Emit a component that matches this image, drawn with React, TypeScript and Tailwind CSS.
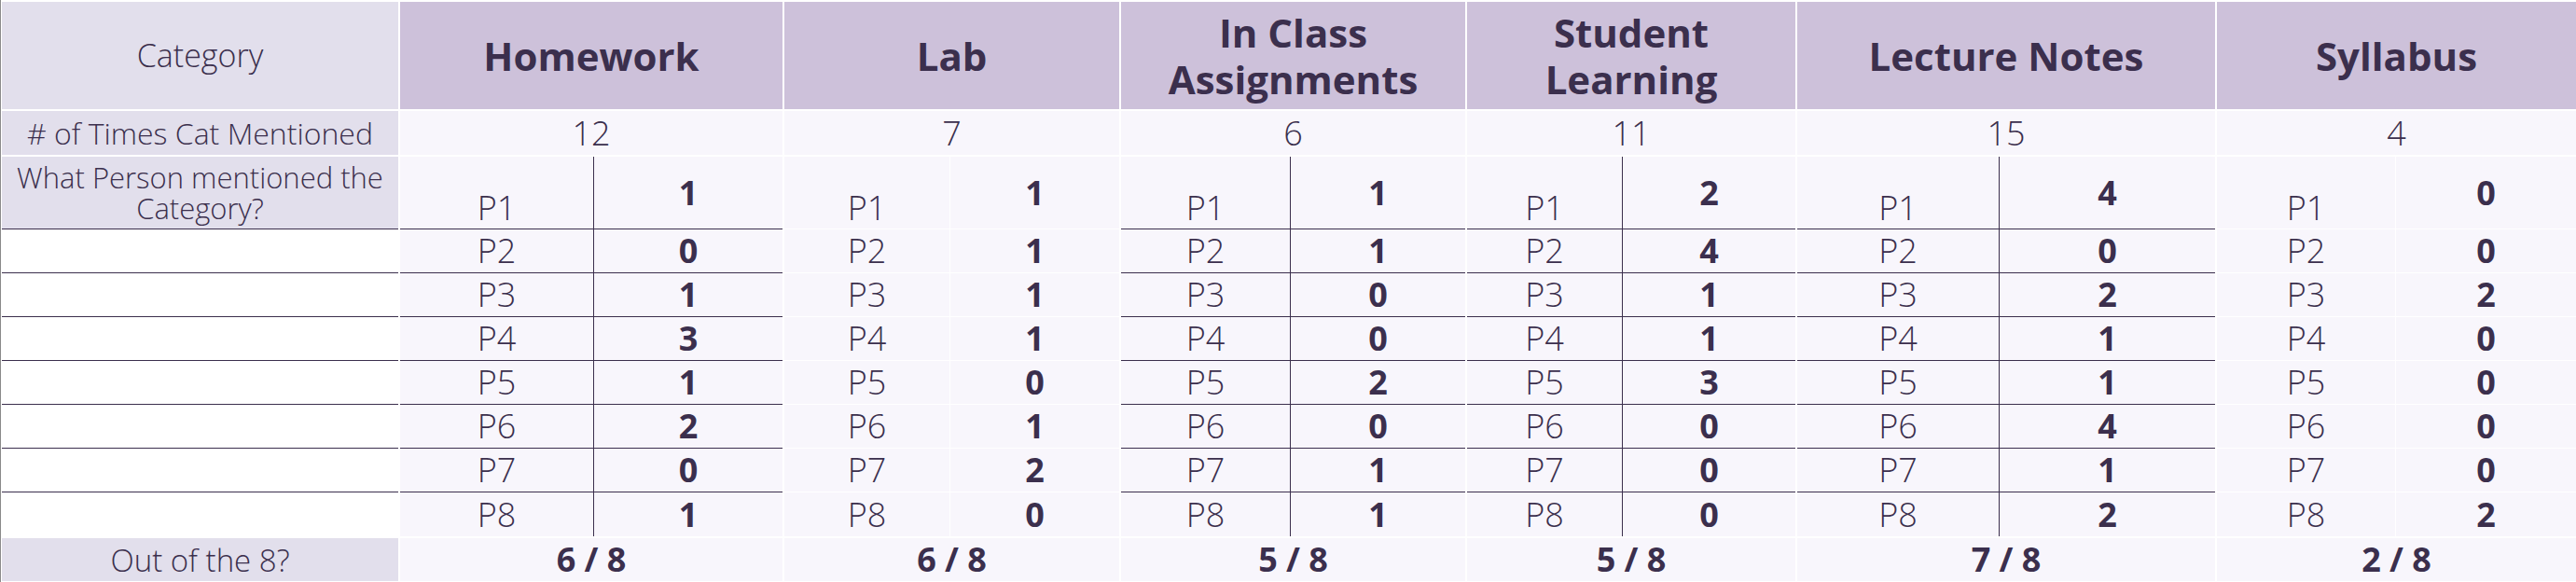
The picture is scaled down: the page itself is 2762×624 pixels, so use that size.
import React from 'react';

type Category = {
  title: string[];
  total: number;
  counts: number[];
  outOf: string;
  ruled: boolean; // dark cell rules (true) or white ones (false)
};

const categories: Category[] = [
  { title: ['Homework'], total: 12, counts: [1, 0, 1, 3, 1, 2, 0, 1], outOf: '6 / 8', ruled: true },
  { title: ['Lab'], total: 7, counts: [1, 1, 1, 1, 0, 1, 2, 0], outOf: '6 / 8', ruled: false },
  { title: ['In Class', 'Assignments'], total: 6, counts: [1, 1, 0, 0, 2, 0, 1, 1], outOf: '5 / 8', ruled: true },
  { title: ['Student', 'Learning'], total: 11, counts: [2, 4, 1, 1, 3, 0, 0, 0], outOf: '5 / 8', ruled: true },
  { title: ['Lecture Notes'], total: 15, counts: [4, 0, 2, 1, 1, 4, 1, 2], outOf: '7 / 8', ruled: true },
  { title: ['Syllabus'], total: 4, counts: [0, 0, 2, 0, 0, 0, 0, 2], outOf: '2 / 8', ruled: false },
];

const cols = 'grid grid-cols-[425px_410px_359px_369px_352px_448px_385px] gap-x-[2px]';
const subCols = [
  'grid-cols-[208px_1fr]',
  'grid-cols-[178px_1fr]',
  'grid-cols-[182px_1fr]',
  'grid-cols-[167px_1fr]',
  'grid-cols-[217px_1fr]',
  'grid-cols-[192px_1fr]',
];

function PersonCell({ cat, idx, index }: { cat: Category; idx: number; index: number }) {
  const first = index === 0;
  const last = index === 7;
  const rule = cat.ruled ? 'border-[#3b2f4d]' : 'border-white';
  return (
    <div className={`grid ${subCols[idx]} bg-[#f8f6fc] ${last ? '' : `border-b ${rule}`}`}>
      <div
        className={`flex justify-center border-r ${rule} text-[36px] font-light leading-none ${
          first ? 'items-end pb-[4px]' : 'items-center'
        }`}
      >
        P{index + 1}
      </div>
      <div className="flex items-center justify-center text-[36px] font-bold leading-none">
        {cat.counts[index]}
      </div>
    </div>
  );
}

export default function App() {
  return (
    <div className="w-[2762px] h-[624px] bg-white border-l border-[#8a8a8a] pl-[1px] pt-[2px] text-[#3b2f4d] font-['Open_Sans','Liberation_Sans',sans-serif]">
      {/* header */}
      <div className={`${cols} h-[115px]`}>
        <div className="flex items-center justify-center bg-[#e2dfec] text-[34px] font-light">Category</div>
        {categories.map((c) => (
          <div
            key={c.title.join(' ')}
            className="flex flex-col items-center justify-center bg-[#cdc1da] text-[42px] font-bold leading-[50px]"
          >
            {c.title.map((line) => (
              <span key={line}>{line}</span>
            ))}
          </div>
        ))}
      </div>

      {/* times mentioned */}
      <div className={`${cols} h-[47px] mt-[2px]`}>
        <div className="flex items-center justify-center bg-[#e2dfec] text-[32px] font-light leading-none">
          # of Times Cat Mentioned
        </div>
        {categories.map((c) => (
          <div
            key={c.title.join(' ')}
            className="flex items-center justify-center bg-[#f8f6fc] text-[36px] font-light leading-none"
          >
            {c.total}
          </div>
        ))}
      </div>

      {/* per person rows */}
      <div className="mt-[2px]">
        {Array.from({ length: 8 }, (_, i) => (
          <div key={i} className={`${cols} ${i === 0 ? 'h-[78px]' : 'h-[47px]'}`}>
            {i === 0 ? (
              <div className="flex flex-col items-center justify-center bg-[#e2dfec] border-b border-[#3b2f4d] text-[31px] font-light leading-[33px] text-center">
                <span>What Person mentioned the</span>
                <span>Category?</span>
              </div>
            ) : (
              <div className={`bg-white ${i === 7 ? '' : 'border-b border-[#3b2f4d]'}`} />
            )}
            {categories.map((c, idx) => (
              <PersonCell key={c.title.join(' ')} cat={c} idx={idx} index={i} />
            ))}
          </div>
        ))}
      </div>

      {/* footer */}
      <div className={`${cols} h-[46px] mt-[2px]`}>
        <div className="flex items-center justify-center bg-[#e2dfec] text-[33px] font-light leading-none">
          Out of the 8?
        </div>
        {categories.map((c) => (
          <div
            key={c.title.join(' ')}
            className="flex items-center justify-center bg-[#f8f6fc] text-[36px] font-bold leading-none"
          >
            {c.outOf}
          </div>
        ))}
      </div>
    </div>
  );
}
